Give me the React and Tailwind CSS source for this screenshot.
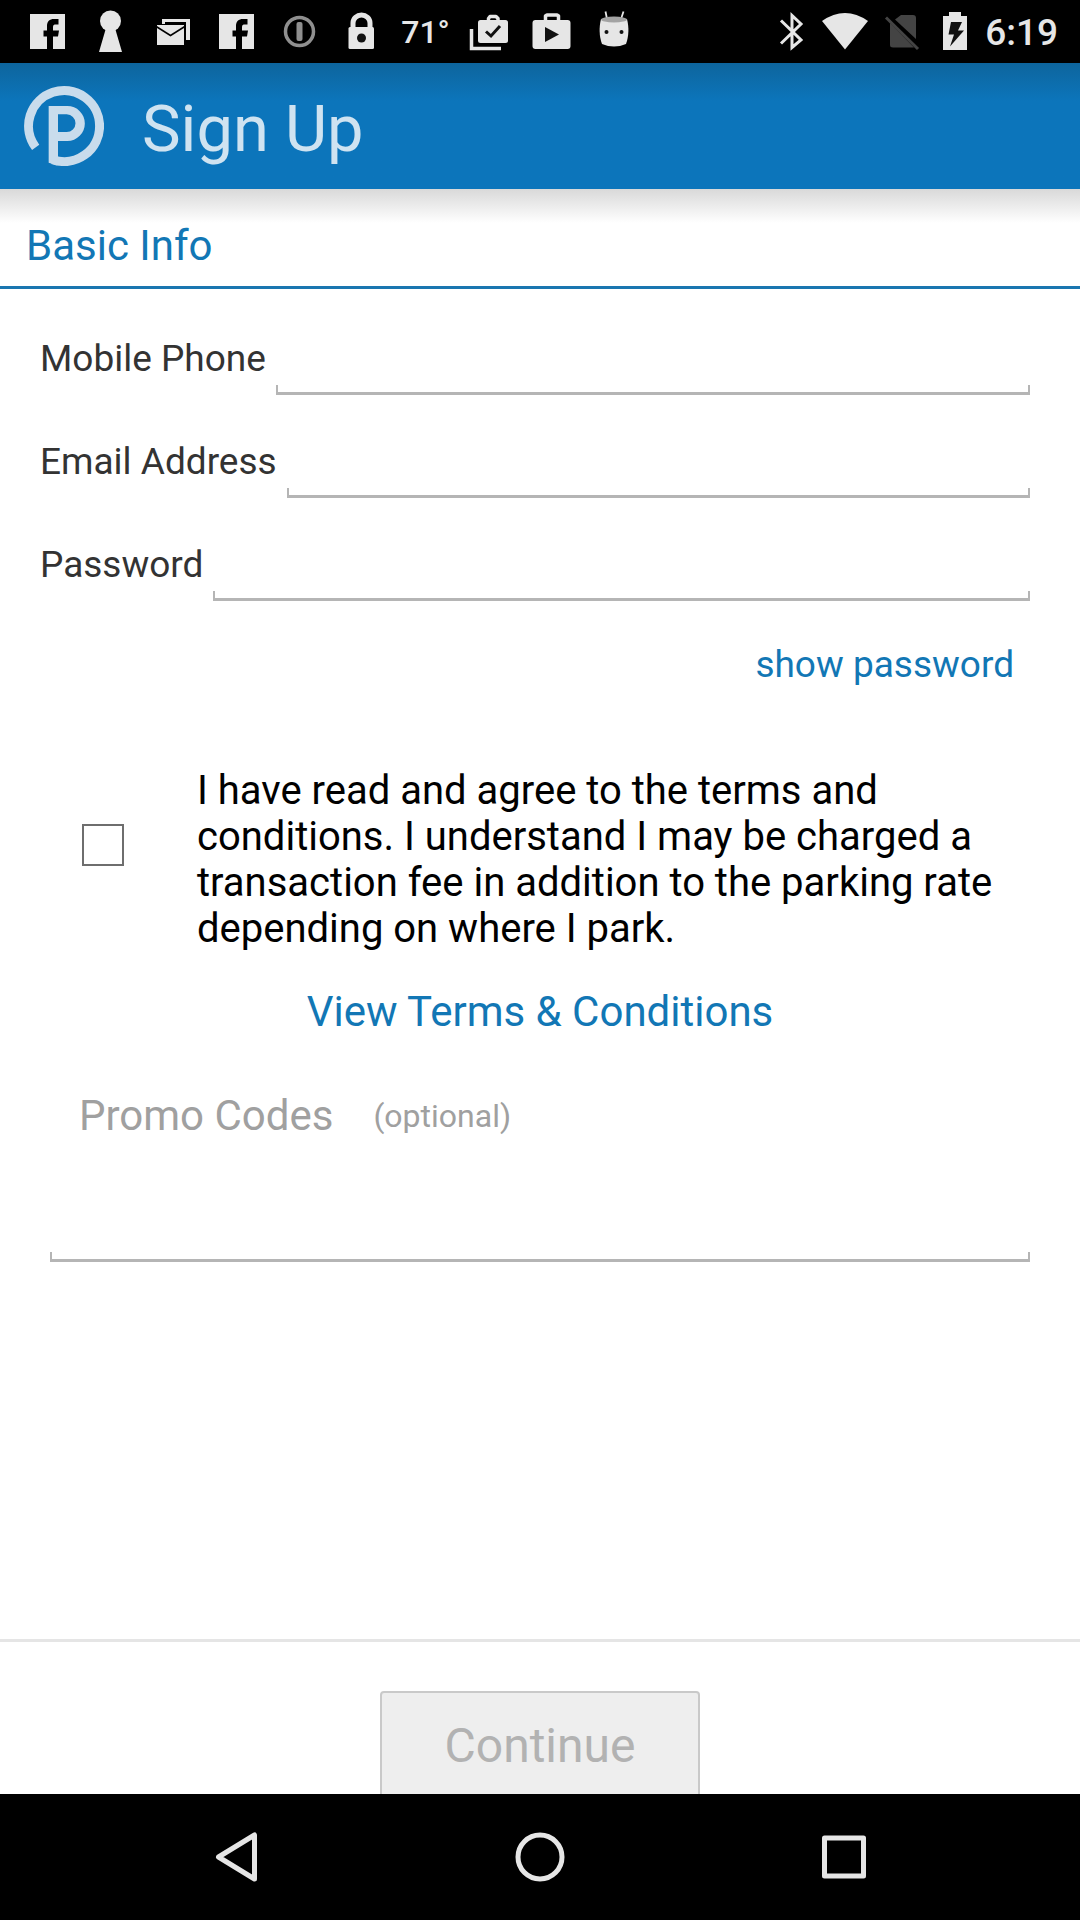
import { useState } from "react";

function StatusIcon({ children }) {
  return (
    <svg viewBox="0 0 63 63" className="h-[63px] w-[63px] shrink-0" fill="#e6e6e6" aria-hidden="true">
      {children}
    </svg>
  );
}

function SignalIcon({ children }) {
  return (
    <svg viewBox="0 0 54 63" className="h-[63px] w-[54px] shrink-0" fill="#e6e6e6" aria-hidden="true">
      {children}
    </svg>
  );
}

function Facebook() {
  return (
    <StatusIcon>
      <path d="M14 14H49V49H37V36.500H42L43 30.500H37V27C37 25 38 24.500 40 24.500H42.500V19H38C33.500 19 31 21.500 31 26V30.500H27.500V36.500H31V49H14Z" />
    </StatusIcon>
  );
}

function StatusBar() {
  return (
    <div className="flex h-[63px] items-center justify-between bg-black pl-4 pr-[22px] text-[#e6e6e6]">
      <div className="flex items-center">
        <Facebook />
        <StatusIcon>
          <circle cx="31.500" cy="21" r="10.500" />
          <path d="M27 28H36L43 52H20Z" />
        </StatusIcon>
        <StatusIcon>
          <path d="M20 19H48V40H44V22H23V24H20Z" />
          <path d="M15 25H42V26L28.500 34.500L15 26Z" />
          <path d="M15 28L28.500 36.500L42 28V45H15Z" />
        </StatusIcon>
        <Facebook />
        <StatusIcon>
          <circle cx="31.500" cy="31.500" r="14" fill="none" stroke="#8f8f8f" strokeWidth="3.500" />
          <rect x="28.500" y="22" width="6" height="19" rx="2" fill="#8f8f8f" />
        </StatusIcon>
        <StatusIcon>
          <path d="M22 28V23a8.500 8 0 0 1 17 0V28" fill="none" stroke="#e6e6e6" strokeWidth="5" />
          <rect x="17.500" y="27" width="25.500" height="22" rx="1.500" />
          <circle cx="30.500" cy="38" r="4.500" fill="#111" />
        </StatusIcon>
        <span className="w-[63px] text-center text-[32px] font-medium leading-none">71°</span>
        <StatusIcon>
          <path d="M14.500 29V48.500H44" fill="none" stroke="#e6e6e6" strokeWidth="3.500" />
          <path d="M31.500 21V18.500L33 16.500H39L41 18.500V21" fill="none" stroke="#e6e6e6" strokeWidth="3.500" strokeLinejoin="round" />
          <rect x="21" y="20" width="30" height="23" rx="2.500" />
          <path d="M29 31.500L34 36L43 26" fill="none" stroke="#111" strokeWidth="3" />
        </StatusIcon>
        <StatusIcon>
          <path d="M25.500 21V16L27 15H37L38.500 16V21" fill="none" stroke="#e6e6e6" strokeWidth="3.500" strokeLinejoin="round" />
          <rect x="12.500" y="20" width="38" height="29" rx="3" />
          <path d="M25 27L39 34.500L25 42Z" fill="#111" />
        </StatusIcon>
        <StatusIcon>
          <path d="M22.500 11.500L24 19M40.500 11.500L38 19" stroke="#e6e6e6" strokeWidth="1.800" />
          <path d="M18 19C16 27 16 36 19 44Q31 49 43 44C46 36 46 27 44 19Z" />
          <ellipse cx="31" cy="19.500" rx="13" ry="3" fill="#a3a3a3" />
          <circle cx="23.500" cy="32" r="2" fill="#111" />
          <circle cx="38.500" cy="32" r="2" fill="#111" />
        </StatusIcon>
      </div>
      <div className="flex items-center">
        <SignalIcon>
          <path d="M18 20.500L38 40L29 47.500V15.500L38 24L18 43.500" fill="none" stroke="#e6e6e6" strokeWidth="3" />
        </SignalIcon>
        <SignalIcon>
          <path d="M5 21Q28 5 51 21L28 49.500Z" />
        </SignalIcon>
        <SignalIcon>
          <path d="M30 15H42Q45 15 45 18V39L24 19.500ZM19 23L43 47.500H22Q19 47.500 19 45Z" fill="#444" />
          <path d="M15 17.500L47 49" stroke="#444" strokeWidth="3" />
        </SignalIcon>
        <SignalIcon>
          <path d="M24 12H36V16H42V50H18V16H24Z" />
          <path d="M26 22H37L33 30.500H39L25 46.500L29 34.500H23.500Z" fill="#111" />
        </SignalIcon>
        <span className="pl-[6px] pt-[2px] text-[37px] font-medium leading-none">6:19</span>
      </div>
    </div>
  );
}

function Logo() {
  return (
    <svg viewBox="71 78 240 240" className="h-20 w-20 shrink-0" aria-hidden="true">
      <path d="M106 262A106.500 106.500 0 1 1 157 299" fill="none" stroke="#c9dcec" strokeWidth="27" />
      <path
        fillRule="evenodd"
        fill="#c9dcec"
        d="M145 138H201A52 52 0 0 1 201 243H173V293L170 316L145 308ZM173 163V216H199A26.500 26.500 0 0 0 199 163Z"
      />
    </svg>
  );
}

function UnderlinedInput({ inputClass, ...props }) {
  return (
    <div className="flex min-w-0 flex-1 flex-col">
      <input {...props} className={"w-full bg-transparent px-3 text-[37px] text-[#333] outline-none " + inputClass} />
      <div className="h-[10px] border-x-2 border-b-3 border-[#b5b5b5]" />
    </div>
  );
}

function Field({ id, label, type }) {
  return (
    <div className="flex h-[103px] items-end gap-[10px]">
      <label htmlFor={id} className="pb-3 text-[37px] leading-[48px] text-[#333]">
        {label}
      </label>
      <UnderlinedInput id={id} type={type} inputClass="h-14" />
    </div>
  );
}

function NavButton({ label, children }) {
  return (
    <button type="button" aria-label={label} className="flex flex-1 items-center justify-center">
      <svg viewBox="0 0 56 56" className="h-14 w-14" fill="none" stroke="#e6e6e6" strokeWidth="5" strokeLinejoin="round">
        {children}
      </svg>
    </button>
  );
}

export default function App() {
  const [visible, setVisible] = useState(false);
  return (
    <div className="flex min-h-screen flex-col bg-white font-[Roboto,sans-serif]">
      <StatusBar />
      <header className="flex h-[126px] items-center gap-[38px] bg-[#0c75bb] bg-linear-to-b from-[#0d659d] to-[#0c75bb] to-30% pl-6">
        <Logo />
        <h1 className="pt-[6px] text-[65px] leading-[72px] text-[#cfe3f1]">Sign Up</h1>
      </header>

      <main className="flex flex-1 flex-col">
        <h2 className="border-b-3 border-[#1a76b0] bg-linear-to-b from-[#d9d9d9] to-white to-35% pb-2 pl-[26px] pt-[25px] text-[42px] leading-[64px] text-[#1277b5]">
          Basic Info
        </h2>

        <form id="signup" className="flex flex-col pl-10 pr-[50px] pt-[3px]" onSubmit={(e) => e.preventDefault()}>
          <Field id="phone" label="Mobile Phone" type="tel" />
          <Field id="email" label="Email Address" type="email" />
          <Field id="password" label="Password" type={visible ? "text" : "password"} />

          <button
            type="button"
            onClick={() => setVisible(!visible)}
            className="mr-4 mt-10 self-end text-[37px] leading-[48px] text-[#1277b5]"
          >
            show password
          </button>

          <div className="mt-[79px] flex items-start gap-[73px] pl-[42px]">
            <input
              id="agree"
              type="checkbox"
              className="mt-14 h-[42px] w-[42px] shrink-0 appearance-none border-2 border-[#6e6e6e] checked:bg-[#1277b5]"
            />
            <label htmlFor="agree" className="text-[40px] leading-[46px] text-black">
              I have read and agree to the terms and conditions. I understand I may be charged a transaction fee in
              addition to the parking rate depending on where I park.
            </label>
          </div>
        </form>

        <a href="#terms" className="mt-7 self-center text-[42px] leading-[64px] text-[#1277b5]">
          View Terms &amp; Conditions
        </a>

        <div className="mt-10 flex flex-col px-[50px]">
          <label htmlFor="promo" className="flex items-center gap-10 pl-[29px] text-[42px] leading-[64px] text-[#a0a0a0]">
            Promo Codes <span className="text-[32px]">(optional)</span>
          </label>
          <UnderlinedInput id="promo" type="text" inputClass="h-[104px]" />
        </div>
      </main>

      <footer className="flex h-[155px] justify-center overflow-hidden border-t-3 border-[#e5e5e5] pt-[49px]">
        <button
          type="submit"
          form="signup"
          disabled
          className="h-[110px] w-80 shrink-0 rounded-sm border-2 border-[#c9c9c9] bg-[#eee] text-[48px] text-[#b2b2b2]"
        >
          Continue
        </button>
      </footer>

      <nav className="flex h-[126px] bg-black px-[84px]">
        <NavButton label="Back">
          <path d="M10.500 28L46.500 6V50Z" />
        </NavButton>
        <NavButton label="Home">
          <circle cx="28" cy="28" r="22" />
        </NavButton>
        <NavButton label="Recent apps">
          <rect x="8.500" y="9" width="39" height="38" />
        </NavButton>
      </nav>
    </div>
  );
}
